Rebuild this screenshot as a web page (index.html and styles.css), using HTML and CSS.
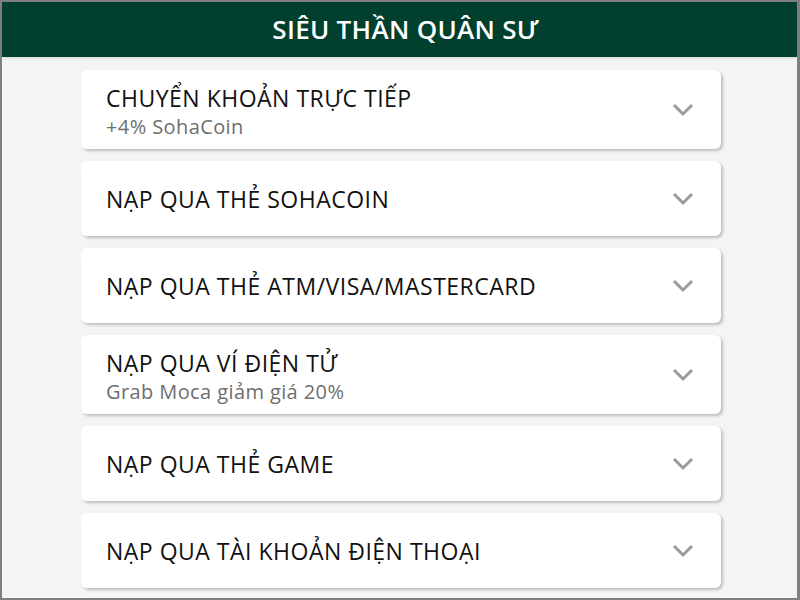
FILE: index.html
```html
<!DOCTYPE html>
<html lang="vi">
<head>
<meta charset="utf-8">
<title>Siêu Thần Quân Sư</title>
<link rel="stylesheet" href="styles.css">
</head>
<body>
<div class="frame">
  <header class="topbar"><h1 class="title">SIÊU THẦN QUÂN SƯ</h1></header>
  <main class="list">
    <div class="card two">
      <div class="text"><div class="name">CHUYỂN KHOẢN TRỰC TIẾP</div><div class="sub">+4% SohaCoin</div></div>
      <svg class="chev" viewBox="0 0 22 14" width="22" height="14"><path d="M2 2 L11 11 L20 2" fill="none" stroke="#9a9a9a" stroke-width="3"/></svg>
    </div>
    <div class="card">
      <div class="text"><div class="name">NẠP QUA THẺ SOHACOIN</div></div>
      <svg class="chev" viewBox="0 0 22 14" width="22" height="14"><path d="M2 2 L11 11 L20 2" fill="none" stroke="#9a9a9a" stroke-width="3"/></svg>
    </div>
    <div class="card">
      <div class="text"><div class="name">NẠP QUA THẺ ATM/VISA/MASTERCARD</div></div>
      <svg class="chev" viewBox="0 0 22 14" width="22" height="14"><path d="M2 2 L11 11 L20 2" fill="none" stroke="#9a9a9a" stroke-width="3"/></svg>
    </div>
    <div class="card two">
      <div class="text"><div class="name">NẠP QUA VÍ ĐIỆN TỬ</div><div class="sub">Grab Moca giảm giá 20%</div></div>
      <svg class="chev" viewBox="0 0 22 14" width="22" height="14"><path d="M2 2 L11 11 L20 2" fill="none" stroke="#9a9a9a" stroke-width="3"/></svg>
    </div>
    <div class="card">
      <div class="text"><div class="name">NẠP QUA THẺ GAME</div></div>
      <svg class="chev" viewBox="0 0 22 14" width="22" height="14"><path d="M2 2 L11 11 L20 2" fill="none" stroke="#9a9a9a" stroke-width="3"/></svg>
    </div>
    <div class="card">
      <div class="text"><div class="name">NẠP QUA TÀI KHOẢN ĐIỆN THOẠI</div></div>
      <svg class="chev" viewBox="0 0 22 14" width="22" height="14"><path d="M2 2 L11 11 L20 2" fill="none" stroke="#9a9a9a" stroke-width="3"/></svg>
    </div>
  </main>
</div>
</body>
</html>
```

FILE: styles.css
```css
html, body {
  margin: 0;
  padding: 0;
  height: 100%;
  overflow: hidden;
}
body {
  font-family: "Open Sans", "Noto Sans", sans-serif;
  background: #808080;
}
.frame {
  box-sizing: border-box;
  height: 600px;
  width: 800px;
  border: 2px solid #7f7f7f;
  border-right-width: 3px;
  background: #f3f4f6;
  overflow: hidden;
}
.topbar {
  height: 55px;
  background: #013f2f;
  display: flex;
  align-items: center;
  justify-content: center;
  box-shadow: 0 1px 3px rgba(0,0,0,0.15);
}
.title {
  margin: 0 0 2px 12px;
  color: #ffffff;
  font-size: 26px;
  font-weight: 600;
  letter-spacing: 0.3px;
}
.list {
  display: flex;
  flex-direction: column;
  gap: 12px;
  padding: 13px 0 0 79px;
}
.card {
  box-sizing: border-box;
  width: 640px;
  height: 75px;
  background: #ffffff;
  border-radius: 6px;
  box-shadow: 2px 2px 3px rgba(0,0,0,0.22);
  display: flex;
  align-items: center;
  justify-content: space-between;
  padding: 0 27px 0 25px;
}
.card.two {
  height: 79px;
  padding-top: 7px;
}
.card.two .chev {
  margin-top: -7px;
}
.name {
  font-size: 23px;
  line-height: 30px;
  letter-spacing: 0.5px;
  color: #111111;
}
.card.two .name {
  line-height: 28px;
}
.sub {
  font-size: 20px;
  line-height: 30px;
  letter-spacing: 0.4px;
  color: #6e6e6e;
}
.chev {
  display: block;
}
```
